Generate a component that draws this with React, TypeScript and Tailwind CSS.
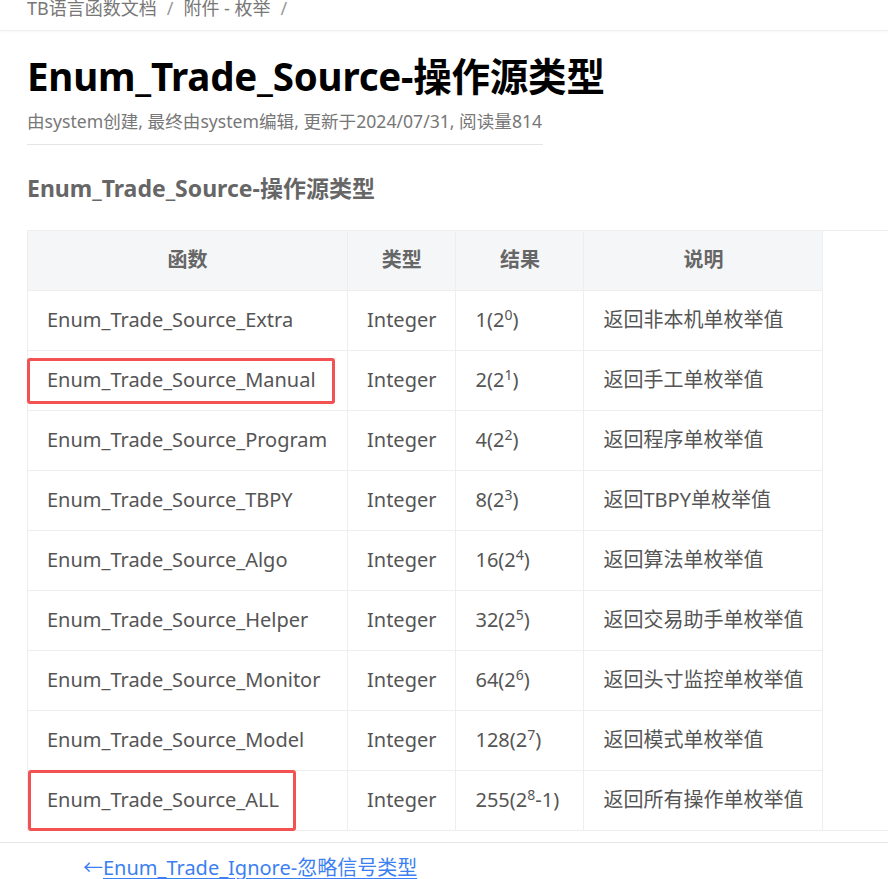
import React from "react";

type Row = {
  name: string;
  base: string;
  exp: string;
  tail?: string;
  desc: string;
  mark?: "manual" | "all";
};

const rows: Row[] = [
  { name: "Enum_Trade_Source_Extra", base: "1(2", exp: "0", desc: "返回非本机单枚举值" },
  { name: "Enum_Trade_Source_Manual", base: "2(2", exp: "1", desc: "返回手工单枚举值", mark: "manual" },
  { name: "Enum_Trade_Source_Program", base: "4(2", exp: "2", desc: "返回程序单枚举值" },
  { name: "Enum_Trade_Source_TBPY", base: "8(2", exp: "3", desc: "返回TBPY单枚举值" },
  { name: "Enum_Trade_Source_Algo", base: "16(2", exp: "4", desc: "返回算法单枚举值" },
  { name: "Enum_Trade_Source_Helper", base: "32(2", exp: "5", desc: "返回交易助手单枚举值" },
  { name: "Enum_Trade_Source_Monitor", base: "64(2", exp: "6", desc: "返回头寸监控单枚举值" },
  { name: "Enum_Trade_Source_Model", base: "128(2", exp: "7", desc: "返回模式单枚举值" },
  { name: "Enum_Trade_Source_ALL", base: "255(2", exp: "8", tail: "-1", desc: "返回所有操作单枚举值", mark: "all" },
];

const font = { fontFamily: '"Noto Sans", "Noto Sans CJK SC", sans-serif' };

export default function App() {
  return (
    <div className="w-[888px] h-[879px] overflow-hidden bg-white text-[#555]" style={font}>
      {/* breadcrumb */}
      <div className="h-[31px] overflow-hidden border-b border-[#f0f0f0] shadow-[0_1px_3px_rgba(0,0,0,0.04)]">
        <div className="mt-[-7px] pl-[27px] text-[18px] leading-[30px] text-[#777] flex gap-[10px]">
          <span>TB语言函数文档</span>
          <span className="text-[#999]">/</span>
          <span>附件 - 枚举</span>
          <span className="text-[#999]">/</span>
        </div>
      </div>

      <div className="pl-[27px]">
        <h1 className="mt-[20px] text-[38.5px] leading-[50px] font-bold text-black tracking-[-0.2px]">
          Enum_Trade_Source-操作源类型
        </h1>
        <p className="mt-[8px] text-[17.6px] leading-[24px] text-[#777] w-[516px] pb-[11px] border-b border-[#e5e5e5]">
          由system创建, 最终由system编辑, 更新于2024/07/31, 阅读量814
        </p>
        <h2 className="mt-[28px] text-[23px] leading-[30px] font-bold text-[#666]">
          Enum_Trade_Source-操作源类型
        </h2>

        <div className="mt-[27px] border-y border-[#eee]">
          <table className="table-fixed border-collapse text-[20px] leading-[26px]">
            <thead>
              <tr className="bg-[#f5f6f8] h-[59px]">
                <th className="w-[320px] border-x border-[#eee] font-bold text-[#666]">函数</th>
                <th className="w-[107px] border-x border-[#eee] font-bold text-[#666]">类型</th>
                <th className="w-[128px] border-x border-[#eee] font-bold text-[#666]">结果</th>
                <th className="w-[239px] border-x border-[#eee] font-bold text-[#666]">说明</th>
              </tr>
            </thead>
            <tbody>
              {rows.map((r) => (
                <tr key={r.name} className="h-[60px] border-t border-[#eee]">
                  <td className="relative border-x border-[#eee] px-[19px] whitespace-nowrap">
                    {r.name}
                    {r.mark === "manual" && (
                      <div className="absolute left-[-1px] top-[7px] w-[308px] h-[46px] border-[3px] border-[#f25252] rounded-[3px]" />
                    )}
                    {r.mark === "all" && (
                      <div className="absolute left-0 top-[-1px] w-[268px] h-[61px] border-[3px] border-[#f25252] rounded-[3px]" />
                    )}
                  </td>
                  <td className="border-x border-[#eee] px-[19px]">Integer</td>
                  <td className="border-x border-[#eee] px-[19px] whitespace-nowrap">
                    {r.base}
                    <sup className="text-[14px]">{r.exp}</sup>
                    {r.tail}
                    )
                  </td>
                  <td className="border-x border-[#eee] px-[19px] whitespace-nowrap">{r.desc}</td>
                </tr>
              ))}
            </tbody>
          </table>
        </div>
      </div>

      <div className="mt-[11px] border-t border-[#e5e5e5] pt-[12px] pl-[83px] text-[20px] leading-[26px] text-[#3b7ff2]">
        <span>←</span>
        <a className="underline underline-offset-[3px]" href="#">
          Enum_Trade_Ignore-忽略信号类型
        </a>
      </div>
    </div>
  );
}
